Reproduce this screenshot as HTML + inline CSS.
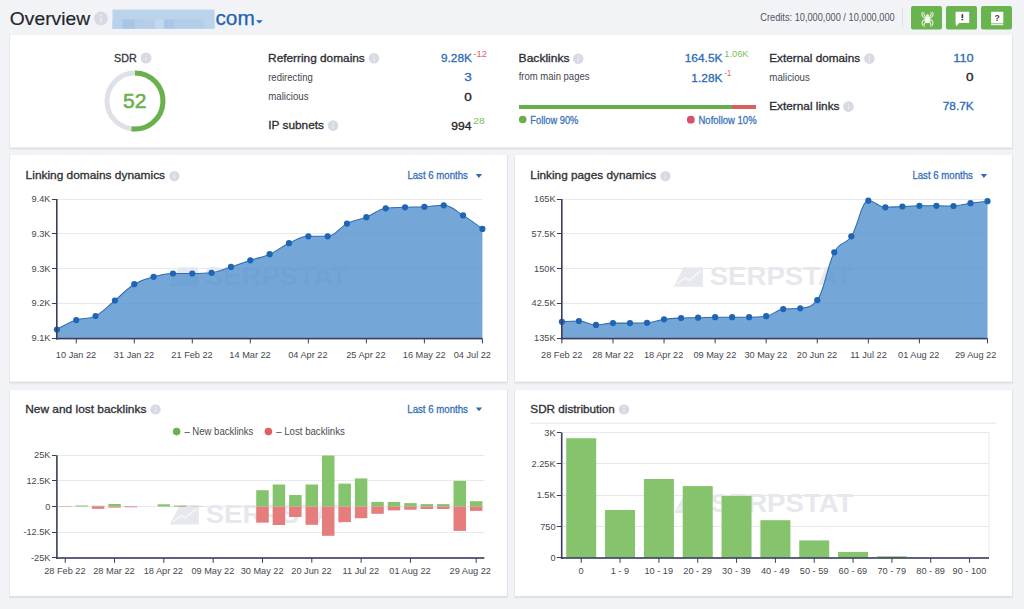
<!DOCTYPE html>
<html><head><meta charset="utf-8"><title>Overview</title>
<style>html,body{margin:0;padding:0;background:#f2f3f7;width:1024px;height:609px;overflow:hidden}
svg{display:block;font-family:"Liberation Sans", sans-serif}</style></head>
<body><svg width="1024" height="609" viewBox="0 0 1024 609">
<rect x="0" y="0" width="1024" height="609" fill="#f2f3f7"/>
<circle cx="101" cy="18.5" r="6.9" fill="#d7dae3"/>
<rect x="100.22" y="17.72" width="1.56" height="4.43" fill="#eceef3"/>
<circle cx="101" cy="15.51" r="0.98" fill="#eceef3"/>
<rect x="112.5" y="9.6" width="102" height="19.1" fill="#bcd3ec"/>
<rect x="112.5" y="19.4" width="9.9" height="9.3" fill="#b9d1eb"/>
<rect x="122.4" y="19.4" width="12.5" height="9.3" fill="#a9c6e7"/>
<rect x="134.9" y="19.4" width="9.1" height="9.3" fill="#b3cdea"/>
<rect x="144" y="19.4" width="10.8" height="9.3" fill="#b5cee9"/>
<rect x="154.8" y="19.4" width="9.1" height="9.3" fill="#c3d8ef"/>
<rect x="163.9" y="19.4" width="10.8" height="9.3" fill="#a9c6e7"/>
<rect x="174.7" y="19.4" width="29.9" height="9.3" fill="#b4ceea"/>
<rect x="204.6" y="19.4" width="9.9" height="9.3" fill="#bcd3ec"/>
<path d="M256,20.3 L262.7,20.3 L259.35,23.5 Z" fill="#1f63b2"/>
<rect x="902" y="8" width="1" height="19" fill="#dfe1e6"/>
<rect x="911" y="6" width="31" height="23.6" rx="2" fill="#6ab450"/>
<rect x="946" y="6" width="31" height="23.6" rx="2" fill="#6ab450"/>
<rect x="981" y="6" width="31" height="23.6" rx="2" fill="#6ab450"/>
<g fill="none" stroke="#e3f3d8" stroke-width="1.05" stroke-linecap="round"><path d="M924.5,17.8 Q920.8,15.5 922.3,12.4"/><path d="M930.5,17.8 Q934.2,15.5 932.7,12.4"/><path d="M925.4,16.6 Q923.2,14.8 923.9,12.6"/><path d="M929.6,16.6 Q931.8,14.8 931.1,12.6"/><path d="M924.3,19.8 Q921.0,21.5 922.6,25.3"/><path d="M930.7,19.8 Q934.0,21.5 932.4,25.3"/><path d="M925.3,22.0 Q923.6,23.6 924.2,26.3"/><path d="M929.7,22.0 Q931.4,23.6 930.8,26.3"/></g>
<path d="M927.5,16 C929.6,16 930.6,18.5 930.6,20 C930.6,22 929.3,23.3 927.5,23.3 C925.7,23.3 924.4,22 924.4,20 C924.4,18.5 925.4,16 927.5,16 Z" fill="#f4fbef"/>
<circle cx="927.5" cy="15.6" r="1.3" fill="#f4fbef"/>
<path d="M955.6,11.8 H969.2 V23 H959.2 L956.2,26.2 L955.6,23 Z" fill="#ffffff"/>
<rect x="961.5" y="14.2" width="1.7" height="3.9" fill="#3d3d3d"/><rect x="961.5" y="18.9" width="1.7" height="1.4" fill="#3d3d3d"/>
<rect x="991.1" y="11.8" width="12.2" height="11.6" fill="#ffffff"/>
<rect x="991.1" y="24" width="12.2" height="1.2" fill="#e4f2dc"/>
<text x="997.2" y="20.6" font-size="8.6" font-weight="bold" text-anchor="middle" fill="#444">?</text>
<rect x="9.4" y="34.7" width="1003.6" height="115.5" fill="#ecedf2"/>
<rect x="9.5" y="35" width="1003.2" height="114.1" fill="#dddee6"/>
<rect x="10" y="35" width="1002" height="112.5" fill="#ffffff"/>
<circle cx="146" cy="58" r="5.5" fill="#d7dae3"/>
<rect x="145.38" y="57.38" width="1.25" height="3.53" fill="#eceef3"/>
<circle cx="146" cy="55.61" r="0.78" fill="#eceef3"/>
<circle cx="135" cy="101" r="28" fill="none" stroke="#dfe1e8" stroke-width="5"/>
<path d="M135,73 A28,28 0 1 1 131.49,128.78" fill="none" stroke="#6ab04c" stroke-width="5"/>
<circle cx="374" cy="58.3" r="5.3" fill="#d7dae3"/>
<rect x="373.40" y="57.70" width="1.20" height="3.40" fill="#eceef3"/>
<circle cx="374" cy="56.00" r="0.75" fill="#eceef3"/>
<circle cx="333" cy="125.6" r="5.3" fill="#d7dae3"/>
<rect x="332.40" y="125.00" width="1.20" height="3.40" fill="#eceef3"/>
<circle cx="333" cy="123.30" r="0.75" fill="#eceef3"/>
<circle cx="578.2" cy="58.7" r="5.3" fill="#d7dae3"/>
<rect x="577.60" y="58.10" width="1.20" height="3.40" fill="#eceef3"/>
<circle cx="578.2" cy="56.40" r="0.75" fill="#eceef3"/>
<rect x="519" y="105" width="213" height="4" fill="#6aae4c"/>
<rect x="732" y="105" width="24" height="4" fill="#da5f5b"/>
<circle cx="522.7" cy="119.5" r="3.8" fill="#6aae4c"/>
<circle cx="690.8" cy="119.7" r="3.9" fill="#d9506a"/>
<circle cx="869.4" cy="58.6" r="5.3" fill="#d7dae3"/>
<rect x="868.80" y="58.00" width="1.20" height="3.40" fill="#eceef3"/>
<circle cx="869.4" cy="56.30" r="0.75" fill="#eceef3"/>
<circle cx="848.5" cy="106.6" r="5.3" fill="#d7dae3"/>
<rect x="847.90" y="106.00" width="1.20" height="3.40" fill="#eceef3"/>
<circle cx="848.5" cy="104.30" r="0.75" fill="#eceef3"/>
<rect x="9.4" y="154.7" width="498.6" height="229.60000000000002" fill="#ecedf2"/>
<rect x="9.5" y="155" width="498.2" height="228.20000000000002" fill="#dddee6"/>
<rect x="10" y="155" width="497" height="226.60000000000002" fill="#ffffff"/>
<rect x="514.4" y="154.7" width="498.6" height="229.60000000000002" fill="#ecedf2"/>
<rect x="514.5" y="155" width="498.2" height="228.20000000000002" fill="#dddee6"/>
<rect x="515" y="155" width="497" height="226.60000000000002" fill="#ffffff"/>
<rect x="9.4" y="389.7" width="498.6" height="209" fill="#ecedf2"/>
<rect x="9.5" y="390" width="498.2" height="207.6" fill="#dddee6"/>
<rect x="10" y="390" width="497" height="206" fill="#ffffff"/>
<rect x="514.4" y="389.7" width="498.6" height="209" fill="#ecedf2"/>
<rect x="514.5" y="390" width="498.2" height="207.6" fill="#dddee6"/>
<rect x="515" y="390" width="497" height="206" fill="#ffffff"/>
<circle cx="174.4" cy="176.1" r="5.2" fill="#d7dae3"/>
<rect x="173.81" y="175.51" width="1.18" height="3.34" fill="#eceef3"/>
<circle cx="174.4" cy="173.84" r="0.74" fill="#eceef3"/>
<path d="M475.7,174.1 L482.09999999999997,174.1 L478.9,177.9 Z" fill="#2e6db4"/>
<rect x="56.9" y="199" width="425.50" height="1" fill="#e8e9ec"/>
<rect x="56.9" y="233" width="425.50" height="1" fill="#e8e9ec"/>
<rect x="56.9" y="268" width="425.50" height="1" fill="#e8e9ec"/>
<rect x="56.9" y="303" width="425.50" height="1" fill="#e8e9ec"/>
<rect x="56.9" y="338" width="425.50" height="1" fill="#e8e9ec"/>
<g opacity="1.0">
<path d="M178.64999999999998,267.3 L197.84999999999997,267.3 L197.84999999999997,286.8 L168.64999999999998,286.8 Z" fill="#e7e8ee"/>
<path d="M171.64999999999998,283.8 L180.64999999999998,277.8 L184.14999999999998,280.3 L195.64999999999998,270.8" fill="none" stroke="#ffffff" stroke-opacity="0.6" stroke-width="1.6"/>
<text x="204.64999999999998" y="285.3" font-size="25.5" font-weight="bold" fill="#e7e8ee" textLength="143" lengthAdjust="spacingAndGlyphs">SERPSTAT</text>
</g>
<path d="M56.90,329.50 C56.90,329.50 68.50,322.80 76.24,320.10 C83.98,317.40 87.85,319.92 95.58,316.00 C103.32,312.08 107.19,306.86 114.92,300.50 C122.66,294.14 126.53,288.94 134.26,284.20 C142.00,279.46 145.87,278.94 153.60,276.80 C161.34,274.66 165.21,273.50 172.95,273.50 C180.68,273.50 184.55,273.50 192.29,273.50 C200.02,273.50 203.89,273.50 211.63,272.80 C219.36,272.10 223.23,269.40 230.97,266.90 C238.70,264.40 242.57,262.84 250.31,260.30 C258.05,257.76 261.91,257.62 269.65,254.20 C277.39,250.78 281.25,246.78 288.99,243.20 C296.73,239.62 300.60,236.30 308.33,236.30 C316.07,236.30 319.94,236.30 327.67,236.30 C335.41,236.30 339.28,227.42 347.01,223.60 C354.75,219.78 358.62,220.26 366.35,217.20 C374.09,214.14 377.96,209.30 385.70,208.30 C393.43,207.30 397.30,207.60 405.04,207.30 C412.77,207.00 416.64,207.20 424.38,206.80 C432.11,206.40 435.98,205.30 443.72,205.30 C451.45,205.30 455.32,210.68 463.06,215.40 C470.80,220.12 482.40,228.90 482.40,228.90 L482.40,338.6 L56.90,338.6 Z" fill="#5191ce" fill-opacity="0.8"/>
<path d="M56.90,329.50 C56.90,329.50 68.50,322.80 76.24,320.10 C83.98,317.40 87.85,319.92 95.58,316.00 C103.32,312.08 107.19,306.86 114.92,300.50 C122.66,294.14 126.53,288.94 134.26,284.20 C142.00,279.46 145.87,278.94 153.60,276.80 C161.34,274.66 165.21,273.50 172.95,273.50 C180.68,273.50 184.55,273.50 192.29,273.50 C200.02,273.50 203.89,273.50 211.63,272.80 C219.36,272.10 223.23,269.40 230.97,266.90 C238.70,264.40 242.57,262.84 250.31,260.30 C258.05,257.76 261.91,257.62 269.65,254.20 C277.39,250.78 281.25,246.78 288.99,243.20 C296.73,239.62 300.60,236.30 308.33,236.30 C316.07,236.30 319.94,236.30 327.67,236.30 C335.41,236.30 339.28,227.42 347.01,223.60 C354.75,219.78 358.62,220.26 366.35,217.20 C374.09,214.14 377.96,209.30 385.70,208.30 C393.43,207.30 397.30,207.60 405.04,207.30 C412.77,207.00 416.64,207.20 424.38,206.80 C432.11,206.40 435.98,205.30 443.72,205.30 C451.45,205.30 455.32,210.68 463.06,215.40 C470.80,220.12 482.40,228.90 482.40,228.90" fill="none" stroke="#2f6cb4" stroke-width="1.05"/>
<circle cx="56.90" cy="329.50" r="3.1" fill="#1f65b5"/>
<circle cx="76.24" cy="320.10" r="3.1" fill="#1f65b5"/>
<circle cx="95.58" cy="316.00" r="3.1" fill="#1f65b5"/>
<circle cx="114.92" cy="300.50" r="3.1" fill="#1f65b5"/>
<circle cx="134.26" cy="284.20" r="3.1" fill="#1f65b5"/>
<circle cx="153.60" cy="276.80" r="3.1" fill="#1f65b5"/>
<circle cx="172.95" cy="273.50" r="3.1" fill="#1f65b5"/>
<circle cx="192.29" cy="273.50" r="3.1" fill="#1f65b5"/>
<circle cx="211.63" cy="272.80" r="3.1" fill="#1f65b5"/>
<circle cx="230.97" cy="266.90" r="3.1" fill="#1f65b5"/>
<circle cx="250.31" cy="260.30" r="3.1" fill="#1f65b5"/>
<circle cx="269.65" cy="254.20" r="3.1" fill="#1f65b5"/>
<circle cx="288.99" cy="243.20" r="3.1" fill="#1f65b5"/>
<circle cx="308.33" cy="236.30" r="3.1" fill="#1f65b5"/>
<circle cx="327.67" cy="236.30" r="3.1" fill="#1f65b5"/>
<circle cx="347.01" cy="223.60" r="3.1" fill="#1f65b5"/>
<circle cx="366.35" cy="217.20" r="3.1" fill="#1f65b5"/>
<circle cx="385.70" cy="208.30" r="3.1" fill="#1f65b5"/>
<circle cx="405.04" cy="207.30" r="3.1" fill="#1f65b5"/>
<circle cx="424.38" cy="206.80" r="3.1" fill="#1f65b5"/>
<circle cx="443.72" cy="205.30" r="3.1" fill="#1f65b5"/>
<circle cx="463.06" cy="215.40" r="3.1" fill="#1f65b5"/>
<circle cx="482.40" cy="228.90" r="3.1" fill="#1f65b5"/>
<rect x="56.00" y="199.00" width="1.6" height="140.60" fill="#3a3e5c"/>
<rect x="56.00" y="337.80" width="426.40" height="1.6" fill="#3a3e5c"/>
<rect x="51.90" y="199" width="4.5" height="1" fill="#3a3e5c"/>
<rect x="51.90" y="233" width="4.5" height="1" fill="#3a3e5c"/>
<rect x="51.90" y="268" width="4.5" height="1" fill="#3a3e5c"/>
<rect x="51.90" y="303" width="4.5" height="1" fill="#3a3e5c"/>
<rect x="51.90" y="338" width="4.5" height="1" fill="#3a3e5c"/>
<rect x="75.74" y="338.60" width="1" height="4.8" fill="#3a3e5c"/>
<rect x="133.76" y="338.60" width="1" height="4.8" fill="#3a3e5c"/>
<rect x="191.79" y="338.60" width="1" height="4.8" fill="#3a3e5c"/>
<rect x="249.81" y="338.60" width="1" height="4.8" fill="#3a3e5c"/>
<rect x="307.83" y="338.60" width="1" height="4.8" fill="#3a3e5c"/>
<rect x="365.85" y="338.60" width="1" height="4.8" fill="#3a3e5c"/>
<rect x="423.88" y="338.60" width="1" height="4.8" fill="#3a3e5c"/>
<rect x="481.90" y="338.60" width="1" height="4.8" fill="#3a3e5c"/>
<circle cx="665.4" cy="176.1" r="5.2" fill="#d7dae3"/>
<rect x="664.81" y="175.51" width="1.18" height="3.34" fill="#eceef3"/>
<circle cx="665.4" cy="173.84" r="0.74" fill="#eceef3"/>
<path d="M980.6999999999999,174.1 L987.1,174.1 L983.9,177.9 Z" fill="#2e6db4"/>
<rect x="561.9" y="199" width="425.60" height="1" fill="#e8e9ec"/>
<rect x="561.9" y="233" width="425.60" height="1" fill="#e8e9ec"/>
<rect x="561.9" y="268" width="425.60" height="1" fill="#e8e9ec"/>
<rect x="561.9" y="303" width="425.60" height="1" fill="#e8e9ec"/>
<rect x="561.9" y="338" width="425.60" height="1" fill="#e8e9ec"/>
<g opacity="1.0">
<path d="M683.7,267.3 L702.9000000000001,267.3 L702.9000000000001,286.8 L673.7,286.8 Z" fill="#e7e8ee"/>
<path d="M676.7,283.8 L685.7,277.8 L689.2,280.3 L700.7,270.8" fill="none" stroke="#ffffff" stroke-opacity="0.6" stroke-width="1.6"/>
<text x="709.7" y="285.3" font-size="25.5" font-weight="bold" fill="#e7e8ee" textLength="143" lengthAdjust="spacingAndGlyphs">SERPSTAT</text>
</g>
<path d="M561.90,321.80 C561.90,321.80 572.11,321.00 578.92,321.00 C585.73,321.00 589.14,324.90 595.95,324.90 C602.76,324.90 606.16,323.10 612.97,323.10 C619.78,323.10 623.19,323.10 630.00,323.10 C636.81,323.10 640.21,323.10 647.02,322.80 C653.83,322.50 657.23,320.26 664.04,319.30 C670.85,318.34 674.26,318.30 681.07,318.00 C687.88,317.70 691.28,317.86 698.09,317.70 C704.90,317.54 708.31,317.20 715.12,317.20 C721.93,317.20 725.33,317.20 732.14,317.20 C738.95,317.20 742.35,317.20 749.16,317.20 C755.97,317.20 759.38,317.20 766.19,316.20 C773.00,315.20 776.40,309.90 783.21,309.10 C790.02,308.30 793.43,309.10 800.24,308.30 C807.05,307.50 810.45,308.30 817.26,300.20 C824.07,292.10 827.47,265.08 834.28,252.30 C841.09,239.52 844.50,246.62 851.31,236.30 C858.12,225.98 861.52,200.70 868.33,200.70 C875.14,200.70 878.55,207.30 885.36,207.30 C892.17,207.30 895.57,206.80 902.38,206.50 C909.19,206.20 912.59,205.80 919.40,205.80 C926.21,205.80 929.62,205.80 936.43,205.80 C943.24,205.80 946.64,206.00 953.45,206.00 C960.26,206.00 963.67,204.16 970.48,203.20 C977.29,202.24 987.50,201.20 987.50,201.20 L987.50,338.6 L561.90,338.6 Z" fill="#5191ce" fill-opacity="0.8"/>
<path d="M561.90,321.80 C561.90,321.80 572.11,321.00 578.92,321.00 C585.73,321.00 589.14,324.90 595.95,324.90 C602.76,324.90 606.16,323.10 612.97,323.10 C619.78,323.10 623.19,323.10 630.00,323.10 C636.81,323.10 640.21,323.10 647.02,322.80 C653.83,322.50 657.23,320.26 664.04,319.30 C670.85,318.34 674.26,318.30 681.07,318.00 C687.88,317.70 691.28,317.86 698.09,317.70 C704.90,317.54 708.31,317.20 715.12,317.20 C721.93,317.20 725.33,317.20 732.14,317.20 C738.95,317.20 742.35,317.20 749.16,317.20 C755.97,317.20 759.38,317.20 766.19,316.20 C773.00,315.20 776.40,309.90 783.21,309.10 C790.02,308.30 793.43,309.10 800.24,308.30 C807.05,307.50 810.45,308.30 817.26,300.20 C824.07,292.10 827.47,265.08 834.28,252.30 C841.09,239.52 844.50,246.62 851.31,236.30 C858.12,225.98 861.52,200.70 868.33,200.70 C875.14,200.70 878.55,207.30 885.36,207.30 C892.17,207.30 895.57,206.80 902.38,206.50 C909.19,206.20 912.59,205.80 919.40,205.80 C926.21,205.80 929.62,205.80 936.43,205.80 C943.24,205.80 946.64,206.00 953.45,206.00 C960.26,206.00 963.67,204.16 970.48,203.20 C977.29,202.24 987.50,201.20 987.50,201.20" fill="none" stroke="#2f6cb4" stroke-width="1.05"/>
<circle cx="561.90" cy="321.80" r="3.1" fill="#1f65b5"/>
<circle cx="578.92" cy="321.00" r="3.1" fill="#1f65b5"/>
<circle cx="595.95" cy="324.90" r="3.1" fill="#1f65b5"/>
<circle cx="612.97" cy="323.10" r="3.1" fill="#1f65b5"/>
<circle cx="630.00" cy="323.10" r="3.1" fill="#1f65b5"/>
<circle cx="647.02" cy="322.80" r="3.1" fill="#1f65b5"/>
<circle cx="664.04" cy="319.30" r="3.1" fill="#1f65b5"/>
<circle cx="681.07" cy="318.00" r="3.1" fill="#1f65b5"/>
<circle cx="698.09" cy="317.70" r="3.1" fill="#1f65b5"/>
<circle cx="715.12" cy="317.20" r="3.1" fill="#1f65b5"/>
<circle cx="732.14" cy="317.20" r="3.1" fill="#1f65b5"/>
<circle cx="749.16" cy="317.20" r="3.1" fill="#1f65b5"/>
<circle cx="766.19" cy="316.20" r="3.1" fill="#1f65b5"/>
<circle cx="783.21" cy="309.10" r="3.1" fill="#1f65b5"/>
<circle cx="800.24" cy="308.30" r="3.1" fill="#1f65b5"/>
<circle cx="817.26" cy="300.20" r="3.1" fill="#1f65b5"/>
<circle cx="834.28" cy="252.30" r="3.1" fill="#1f65b5"/>
<circle cx="851.31" cy="236.30" r="3.1" fill="#1f65b5"/>
<circle cx="868.33" cy="200.70" r="3.1" fill="#1f65b5"/>
<circle cx="885.36" cy="207.30" r="3.1" fill="#1f65b5"/>
<circle cx="902.38" cy="206.50" r="3.1" fill="#1f65b5"/>
<circle cx="919.40" cy="205.80" r="3.1" fill="#1f65b5"/>
<circle cx="936.43" cy="205.80" r="3.1" fill="#1f65b5"/>
<circle cx="953.45" cy="206.00" r="3.1" fill="#1f65b5"/>
<circle cx="970.48" cy="203.20" r="3.1" fill="#1f65b5"/>
<circle cx="987.50" cy="201.20" r="3.1" fill="#1f65b5"/>
<rect x="561.00" y="199.00" width="1.6" height="140.60" fill="#3a3e5c"/>
<rect x="561.00" y="337.80" width="426.50" height="1.6" fill="#3a3e5c"/>
<rect x="556.90" y="199" width="4.5" height="1" fill="#3a3e5c"/>
<rect x="556.90" y="233" width="4.5" height="1" fill="#3a3e5c"/>
<rect x="556.90" y="268" width="4.5" height="1" fill="#3a3e5c"/>
<rect x="556.90" y="303" width="4.5" height="1" fill="#3a3e5c"/>
<rect x="556.90" y="338" width="4.5" height="1" fill="#3a3e5c"/>
<rect x="561.40" y="338.60" width="1" height="4.8" fill="#3a3e5c"/>
<rect x="612.47" y="338.60" width="1" height="4.8" fill="#3a3e5c"/>
<rect x="663.54" y="338.60" width="1" height="4.8" fill="#3a3e5c"/>
<rect x="714.62" y="338.60" width="1" height="4.8" fill="#3a3e5c"/>
<rect x="765.69" y="338.60" width="1" height="4.8" fill="#3a3e5c"/>
<rect x="816.76" y="338.60" width="1" height="4.8" fill="#3a3e5c"/>
<rect x="867.83" y="338.60" width="1" height="4.8" fill="#3a3e5c"/>
<rect x="918.90" y="338.60" width="1" height="4.8" fill="#3a3e5c"/>
<rect x="987.00" y="338.60" width="1" height="4.8" fill="#3a3e5c"/>
<circle cx="155.5" cy="409.4" r="5.2" fill="#d7dae3"/>
<rect x="154.91" y="408.81" width="1.18" height="3.34" fill="#eceef3"/>
<circle cx="155.5" cy="407.14" r="0.74" fill="#eceef3"/>
<path d="M475.8,407.40000000000003 L482.2,407.40000000000003 L479,411.2 Z" fill="#2e6db4"/>
<circle cx="176.6" cy="431.6" r="3.8" fill="#6ab04c"/>
<circle cx="268.4" cy="431.6" r="3.8" fill="#e06060"/>
<rect x="57" y="455" width="427.40" height="1" fill="#e8e9ec"/>
<rect x="57" y="480" width="427.40" height="1" fill="#e8e9ec"/>
<rect x="57" y="506" width="427.40" height="1" fill="#e8e9ec"/>
<rect x="57" y="532" width="427.40" height="1" fill="#e8e9ec"/>
<rect x="57" y="557" width="427.40" height="1" fill="#e8e9ec"/>
<g opacity="1.0">
<path d="M179.7,505.1 L198.89999999999998,505.1 L198.89999999999998,524.6 L169.7,524.6 Z" fill="#e7e8ee"/>
<path d="M172.7,521.6 L181.7,515.6 L185.2,518.1 L196.7,508.6" fill="none" stroke="#ffffff" stroke-opacity="0.6" stroke-width="1.6"/>
<text x="205.7" y="523.1" font-size="25.5" font-weight="bold" fill="#e7e8ee" textLength="143" lengthAdjust="spacingAndGlyphs">SERPSTAT</text>
</g>
<rect x="58.97" y="506.20" width="12.5" height="0.30" fill="#85c46c"/>
<rect x="58.97" y="506.50" width="12.5" height="0.30" fill="#e67d7d"/>
<rect x="75.41" y="505.50" width="12.5" height="1.00" fill="#85c46c"/>
<rect x="91.85" y="505.80" width="12.5" height="0.70" fill="#85c46c"/>
<rect x="91.85" y="506.50" width="12.5" height="2.30" fill="#e67d7d"/>
<rect x="108.28" y="504.00" width="12.5" height="2.50" fill="#85c46c"/>
<rect x="108.28" y="506.50" width="12.5" height="1.10" fill="#e67d7d"/>
<rect x="124.72" y="506.20" width="12.5" height="0.30" fill="#85c46c"/>
<rect x="124.72" y="506.50" width="12.5" height="0.80" fill="#e67d7d"/>
<rect x="157.60" y="504.30" width="12.5" height="2.20" fill="#85c46c"/>
<rect x="174.04" y="505.60" width="12.5" height="0.90" fill="#85c46c"/>
<rect x="174.04" y="506.50" width="12.5" height="0.40" fill="#e67d7d"/>
<rect x="190.48" y="506.20" width="12.5" height="0.30" fill="#85c46c"/>
<rect x="256.23" y="490.20" width="12.5" height="16.30" fill="#85c46c"/>
<rect x="256.23" y="506.50" width="12.5" height="16.10" fill="#e67d7d"/>
<rect x="272.67" y="484.50" width="12.5" height="22.00" fill="#85c46c"/>
<rect x="272.67" y="506.50" width="12.5" height="18.50" fill="#e67d7d"/>
<rect x="289.11" y="495.00" width="12.5" height="11.50" fill="#85c46c"/>
<rect x="289.11" y="506.50" width="12.5" height="10.50" fill="#e67d7d"/>
<rect x="305.55" y="484.50" width="12.5" height="22.00" fill="#85c46c"/>
<rect x="305.55" y="506.50" width="12.5" height="18.30" fill="#e67d7d"/>
<rect x="321.98" y="455.50" width="12.5" height="51.00" fill="#85c46c"/>
<rect x="321.98" y="506.50" width="12.5" height="29.30" fill="#e67d7d"/>
<rect x="338.42" y="483.60" width="12.5" height="22.90" fill="#85c46c"/>
<rect x="338.42" y="506.50" width="12.5" height="15.60" fill="#e67d7d"/>
<rect x="354.86" y="478.40" width="12.5" height="28.10" fill="#85c46c"/>
<rect x="354.86" y="506.50" width="12.5" height="11.70" fill="#e67d7d"/>
<rect x="371.30" y="501.90" width="12.5" height="4.60" fill="#85c46c"/>
<rect x="371.30" y="506.50" width="12.5" height="7.30" fill="#e67d7d"/>
<rect x="387.74" y="501.90" width="12.5" height="4.60" fill="#85c46c"/>
<rect x="387.74" y="506.50" width="12.5" height="3.90" fill="#e67d7d"/>
<rect x="404.18" y="503.10" width="12.5" height="3.40" fill="#85c46c"/>
<rect x="404.18" y="506.50" width="12.5" height="3.20" fill="#e67d7d"/>
<rect x="420.62" y="504.10" width="12.5" height="2.40" fill="#85c46c"/>
<rect x="420.62" y="506.50" width="12.5" height="2.50" fill="#e67d7d"/>
<rect x="437.05" y="504.10" width="12.5" height="2.40" fill="#85c46c"/>
<rect x="437.05" y="506.50" width="12.5" height="2.50" fill="#e67d7d"/>
<rect x="453.49" y="480.90" width="12.5" height="25.60" fill="#85c46c"/>
<rect x="453.49" y="506.50" width="12.5" height="24.40" fill="#e67d7d"/>
<rect x="469.93" y="501.20" width="12.5" height="5.30" fill="#85c46c"/>
<rect x="469.93" y="506.50" width="12.5" height="4.40" fill="#e67d7d"/>
<rect x="56.10" y="455.30" width="1.6" height="103.70" fill="#3a3e5c"/>
<rect x="56.10" y="557.20" width="428.30" height="1.6" fill="#3a3e5c"/>
<rect x="52.00" y="455" width="4.5" height="1" fill="#3a3e5c"/>
<rect x="52.00" y="480" width="4.5" height="1" fill="#3a3e5c"/>
<rect x="52.00" y="506" width="4.5" height="1" fill="#3a3e5c"/>
<rect x="52.00" y="532" width="4.5" height="1" fill="#3a3e5c"/>
<rect x="52.00" y="557" width="4.5" height="1" fill="#3a3e5c"/>
<rect x="64.72" y="558.00" width="1" height="4.8" fill="#3a3e5c"/>
<rect x="114.03" y="558.00" width="1" height="4.8" fill="#3a3e5c"/>
<rect x="163.35" y="558.00" width="1" height="4.8" fill="#3a3e5c"/>
<rect x="212.67" y="558.00" width="1" height="4.8" fill="#3a3e5c"/>
<rect x="261.98" y="558.00" width="1" height="4.8" fill="#3a3e5c"/>
<rect x="311.30" y="558.00" width="1" height="4.8" fill="#3a3e5c"/>
<rect x="360.61" y="558.00" width="1" height="4.8" fill="#3a3e5c"/>
<rect x="409.93" y="558.00" width="1" height="4.8" fill="#3a3e5c"/>
<rect x="475.68" y="558.00" width="1" height="4.8" fill="#3a3e5c"/>
<circle cx="624" cy="409.4" r="5.2" fill="#d7dae3"/>
<rect x="623.41" y="408.81" width="1.18" height="3.34" fill="#eceef3"/>
<circle cx="624" cy="407.14" r="0.74" fill="#eceef3"/>
<rect x="530" y="422.7" width="466" height="1" fill="#e4e5e9"/>
<rect x="561.8" y="432" width="427.20" height="1" fill="#e8e9ec"/>
<rect x="561.8" y="463" width="427.20" height="1" fill="#e8e9ec"/>
<rect x="561.8" y="495" width="427.20" height="1" fill="#e8e9ec"/>
<rect x="561.8" y="526" width="427.20" height="1" fill="#e8e9ec"/>
<rect x="561.8" y="557" width="427.20" height="1" fill="#e8e9ec"/>
<rect x="988.50" y="432.00" width="1" height="125.50" fill="#e8e9ec"/>
<g opacity="1.0">
<path d="M684.4,493.6 L703.6,493.6 L703.6,513.1 L674.4,513.1 Z" fill="#e7e8ee"/>
<path d="M677.4,510.1 L686.4,504.1 L689.9,506.6 L701.4,497.1" fill="none" stroke="#ffffff" stroke-opacity="0.6" stroke-width="1.6"/>
<text x="710.4" y="511.6" font-size="25.5" font-weight="bold" fill="#e7e8ee" textLength="143" lengthAdjust="spacingAndGlyphs">SERPSTAT</text>
</g>
<rect x="566.22" y="438.20" width="30" height="119.50" fill="#85c46c"/>
<rect x="605.05" y="510.00" width="30" height="47.70" fill="#85c46c"/>
<rect x="643.89" y="479.00" width="30" height="78.70" fill="#85c46c"/>
<rect x="682.73" y="486.10" width="30" height="71.60" fill="#85c46c"/>
<rect x="721.56" y="495.90" width="30" height="61.80" fill="#85c46c"/>
<rect x="760.40" y="520.20" width="30" height="37.50" fill="#85c46c"/>
<rect x="799.24" y="540.40" width="30" height="17.30" fill="#85c46c"/>
<rect x="838.07" y="551.90" width="30" height="5.80" fill="#85c46c"/>
<rect x="876.91" y="556.30" width="30" height="1.40" fill="#85c46c"/>
<rect x="560.90" y="432.50" width="1.6" height="126.50" fill="#3a3e5c"/>
<rect x="560.90" y="557.20" width="428.10" height="1.6" fill="#3a3e5c"/>
<rect x="556.80" y="432" width="4.5" height="1" fill="#3a3e5c"/>
<rect x="556.80" y="463" width="4.5" height="1" fill="#3a3e5c"/>
<rect x="556.80" y="495" width="4.5" height="1" fill="#3a3e5c"/>
<rect x="556.80" y="526" width="4.5" height="1" fill="#3a3e5c"/>
<rect x="556.80" y="557" width="4.5" height="1" fill="#3a3e5c"/>
<rect x="580.72" y="558.00" width="1" height="4.8" fill="#3a3e5c"/>
<rect x="619.55" y="558.00" width="1" height="4.8" fill="#3a3e5c"/>
<rect x="658.39" y="558.00" width="1" height="4.8" fill="#3a3e5c"/>
<rect x="697.23" y="558.00" width="1" height="4.8" fill="#3a3e5c"/>
<rect x="736.06" y="558.00" width="1" height="4.8" fill="#3a3e5c"/>
<rect x="774.90" y="558.00" width="1" height="4.8" fill="#3a3e5c"/>
<rect x="813.74" y="558.00" width="1" height="4.8" fill="#3a3e5c"/>
<rect x="852.57" y="558.00" width="1" height="4.8" fill="#3a3e5c"/>
<rect x="891.41" y="558.00" width="1" height="4.8" fill="#3a3e5c"/>
<rect x="930.25" y="558.00" width="1" height="4.8" fill="#3a3e5c"/>
<rect x="969.08" y="558.00" width="1" height="4.8" fill="#3a3e5c"/>
<text x="9.89" y="25.00" font-size="18.5" stroke="#24272d" stroke-width="0.20" textLength="80.22" lengthAdjust="spacingAndGlyphs" fill="#24272d">Overview</text>
<text x="215.40" y="25.30" font-size="20" stroke="#1f63b2" stroke-width="0.25" textLength="39.40" lengthAdjust="spacingAndGlyphs" fill="#1f63b2">com</text>
<text x="760.34" y="21.40" font-size="11" textLength="134.32" lengthAdjust="spacingAndGlyphs" fill="#50545c">Credits: 10,000,000 / 10,000,000</text>
<text x="114.04" y="62.00" font-size="11" stroke="#33363c" stroke-width="0.30" textLength="22.62" lengthAdjust="spacingAndGlyphs" fill="#33363c">SDR</text>
<text x="123.04" y="108.20" font-size="21" stroke="#6ab04c" stroke-width="0.57" fill="#6ab04c">52</text>
<text x="268.14" y="62.00" font-size="11" stroke="#2b2e34" stroke-width="0.30" textLength="96.62" lengthAdjust="spacingAndGlyphs" fill="#2b2e34">Referring domains</text>
<text x="441.04" y="62.00" font-size="11" stroke="#2e6db4" stroke-width="0.30" textLength="30.82" lengthAdjust="spacingAndGlyphs" fill="#2e6db4">9.28K</text>
<text x="473.39" y="56.50" font-size="8.5" textLength="13.52" lengthAdjust="spacingAndGlyphs" fill="#e0606c">-12</text>
<text x="268.20" y="80.70" font-size="10" textLength="44.60" lengthAdjust="spacingAndGlyphs" fill="#44474d">redirecting</text>
<text x="464.34" y="81.20" font-size="11" stroke="#2e6db4" stroke-width="0.30" textLength="7.52" lengthAdjust="spacingAndGlyphs" fill="#2e6db4">3</text>
<text x="268.20" y="100.00" font-size="10" textLength="40.40" lengthAdjust="spacingAndGlyphs" fill="#44474d">malicious</text>
<text x="464.34" y="100.80" font-size="11" stroke="#222" stroke-width="0.30" textLength="7.52" lengthAdjust="spacingAndGlyphs" fill="#222">0</text>
<text x="268.34" y="129.00" font-size="11" stroke="#2b2e34" stroke-width="0.30" textLength="55.62" lengthAdjust="spacingAndGlyphs" fill="#2b2e34">IP subnets</text>
<text x="451.34" y="129.50" font-size="11" stroke="#222" stroke-width="0.30" textLength="20.22" lengthAdjust="spacingAndGlyphs" fill="#222">994</text>
<text x="473.39" y="124.00" font-size="8.5" textLength="11.32" lengthAdjust="spacingAndGlyphs" fill="#79bd5a">28</text>
<text x="518.64" y="62.10" font-size="11" stroke="#2b2e34" stroke-width="0.30" textLength="50.92" lengthAdjust="spacingAndGlyphs" fill="#2b2e34">Backlinks</text>
<text x="684.74" y="62.00" font-size="11" stroke="#2e6db4" stroke-width="0.30" textLength="37.72" lengthAdjust="spacingAndGlyphs" fill="#2e6db4">164.5K</text>
<text x="724.39" y="56.50" font-size="8.5" textLength="24.12" lengthAdjust="spacingAndGlyphs" fill="#79bd5a">1.06K</text>
<text x="518.70" y="80.20" font-size="10" textLength="70.80" lengthAdjust="spacingAndGlyphs" fill="#44474d">from main pages</text>
<text x="691.34" y="81.50" font-size="11" stroke="#2e6db4" stroke-width="0.30" textLength="31.12" lengthAdjust="spacingAndGlyphs" fill="#2e6db4">1.28K</text>
<text x="724.39" y="75.70" font-size="8.5" textLength="6.72" lengthAdjust="spacingAndGlyphs" fill="#e0606c">-1</text>
<text x="530.30" y="123.80" font-size="10" stroke="#3a74bb" stroke-width="0.27" textLength="48.10" lengthAdjust="spacingAndGlyphs" fill="#3a74bb">Follow 90%</text>
<text x="698.50" y="123.60" font-size="10" stroke="#3a74bb" stroke-width="0.27" textLength="58.10" lengthAdjust="spacingAndGlyphs" fill="#3a74bb">Nofollow 10%</text>
<text x="769.24" y="62.00" font-size="11" stroke="#2b2e34" stroke-width="0.30" textLength="90.92" lengthAdjust="spacingAndGlyphs" fill="#2b2e34">External domains</text>
<text x="953.24" y="61.90" font-size="11" stroke="#2e6db4" stroke-width="0.30" textLength="20.42" lengthAdjust="spacingAndGlyphs" fill="#2e6db4">110</text>
<text x="769.30" y="80.70" font-size="10" textLength="40.60" lengthAdjust="spacingAndGlyphs" fill="#44474d">malicious</text>
<text x="966.14" y="81.40" font-size="11" stroke="#222" stroke-width="0.30" textLength="7.52" lengthAdjust="spacingAndGlyphs" fill="#222">0</text>
<text x="769.24" y="109.70" font-size="11" stroke="#2b2e34" stroke-width="0.30" textLength="70.22" lengthAdjust="spacingAndGlyphs" fill="#2b2e34">External links</text>
<text x="942.74" y="109.70" font-size="11" stroke="#2e6db4" stroke-width="0.30" textLength="30.92" lengthAdjust="spacingAndGlyphs" fill="#2e6db4">78.7K</text>
<text x="25.63" y="179.10" font-size="11.2" stroke="#2e3136" stroke-width="0.31" textLength="139.44" lengthAdjust="spacingAndGlyphs" fill="#2e3136">Linking domains dynamics</text>
<text x="407.40" y="178.80" font-size="10" stroke="#3470b8" stroke-width="0.27" textLength="60.50" lengthAdjust="spacingAndGlyphs" fill="#3470b8">Last 6 months</text>
<text x="31.55" y="202.10" font-size="9.2" fill="#45484e">9.4K</text>
<text x="31.55" y="236.85" font-size="9.2" fill="#45484e">9.3K</text>
<text x="31.55" y="271.60" font-size="9.2" fill="#45484e">9.3K</text>
<text x="31.55" y="306.35" font-size="9.2" fill="#45484e">9.2K</text>
<text x="31.55" y="341.10" font-size="9.2" fill="#45484e">9.1K</text>
<text x="55.87" y="357.80" font-size="9.2" fill="#45484e">10 Jan 22</text>
<text x="113.87" y="357.80" font-size="9.2" fill="#45484e">31 Jan 22</text>
<text x="171.36" y="357.80" font-size="9.2" fill="#45484e">21 Feb 22</text>
<text x="229.36" y="357.80" font-size="9.2" fill="#45484e">14 Mar 22</text>
<text x="288.23" y="357.80" font-size="9.2" fill="#45484e">04 Apr 22</text>
<text x="346.23" y="357.80" font-size="9.2" fill="#45484e">25 Apr 22</text>
<text x="402.80" y="357.80" font-size="9.2" fill="#45484e">16 May 22</text>
<text x="453.70" y="357.80" font-size="9.2" fill="#45484e">04 Jul 22</text>
<text x="530.33" y="179.10" font-size="11.2" stroke="#2e3136" stroke-width="0.31" textLength="125.94" lengthAdjust="spacingAndGlyphs" fill="#2e3136">Linking pages dynamics</text>
<text x="912.40" y="178.80" font-size="10" stroke="#3470b8" stroke-width="0.27" textLength="60.50" lengthAdjust="spacingAndGlyphs" fill="#3470b8">Last 6 months</text>
<text x="534.09" y="202.10" font-size="9.2" fill="#45484e">165K</text>
<text x="531.54" y="236.85" font-size="9.2" fill="#45484e">57.5K</text>
<text x="534.09" y="271.60" font-size="9.2" fill="#45484e">150K</text>
<text x="531.54" y="306.35" font-size="9.2" fill="#45484e">42.5K</text>
<text x="534.09" y="341.10" font-size="9.2" fill="#45484e">135K</text>
<text x="541.06" y="358.00" font-size="9.2" fill="#45484e">28 Feb 22</text>
<text x="592.16" y="358.00" font-size="9.2" fill="#45484e">28 Mar 22</text>
<text x="643.93" y="358.00" font-size="9.2" fill="#45484e">18 Apr 22</text>
<text x="693.40" y="358.00" font-size="9.2" fill="#45484e">09 May 22</text>
<text x="744.40" y="358.00" font-size="9.2" fill="#45484e">30 May 22</text>
<text x="796.77" y="358.00" font-size="9.2" fill="#45484e">20 Jun 22</text>
<text x="850.15" y="358.00" font-size="9.2" fill="#45484e">11 Jul 22</text>
<text x="898.10" y="358.00" font-size="9.2" fill="#45484e">01 Aug 22</text>
<text x="954.90" y="358.00" font-size="9.2" fill="#45484e">29 Aug 22</text>
<text x="25.23" y="412.60" font-size="11.2" stroke="#2e3136" stroke-width="0.31" textLength="121.14" lengthAdjust="spacingAndGlyphs" fill="#2e3136">New and lost backlinks</text>
<text x="407.30" y="412.80" font-size="10" stroke="#3470b8" stroke-width="0.27" textLength="60.60" lengthAdjust="spacingAndGlyphs" fill="#3470b8">Last 6 months</text>
<text x="184.40" y="434.90" font-size="10" textLength="69.00" lengthAdjust="spacingAndGlyphs" fill="#4a4d52">– New backlinks</text>
<text x="276.20" y="434.90" font-size="10" textLength="68.60" lengthAdjust="spacingAndGlyphs" fill="#4a4d52">– Lost backlinks</text>
<text x="34.10" y="458.40" font-size="9.2" fill="#45484e">25K</text>
<text x="26.44" y="484.00" font-size="9.2" fill="#45484e">12.5K</text>
<text x="45.34" y="509.60" font-size="9.2" fill="#45484e">0</text>
<text x="23.38" y="535.20" font-size="9.2" fill="#45484e">-12.5K</text>
<text x="31.04" y="560.80" font-size="9.2" fill="#45484e">-25K</text>
<text x="44.16" y="573.70" font-size="9.2" fill="#45484e">28 Feb 22</text>
<text x="93.26" y="573.70" font-size="9.2" fill="#45484e">28 Mar 22</text>
<text x="143.63" y="573.70" font-size="9.2" fill="#45484e">18 Apr 22</text>
<text x="191.40" y="573.70" font-size="9.2" fill="#45484e">09 May 22</text>
<text x="240.70" y="573.70" font-size="9.2" fill="#45484e">30 May 22</text>
<text x="291.27" y="573.70" font-size="9.2" fill="#45484e">20 Jun 22</text>
<text x="342.55" y="573.70" font-size="9.2" fill="#45484e">11 Jul 22</text>
<text x="389.30" y="573.70" font-size="9.2" fill="#45484e">01 Aug 22</text>
<text x="449.60" y="573.70" font-size="9.2" fill="#45484e">29 Aug 22</text>
<text x="530.33" y="412.60" font-size="11.2" stroke="#2e3136" stroke-width="0.31" textLength="84.54" lengthAdjust="spacingAndGlyphs" fill="#2e3136">SDR distribution</text>
<text x="544.31" y="435.60" font-size="9.2" fill="#45484e">3K</text>
<text x="531.54" y="466.90" font-size="9.2" fill="#45484e">2.25K</text>
<text x="536.65" y="498.20" font-size="9.2" fill="#45484e">1.5K</text>
<text x="540.22" y="529.50" font-size="9.2" fill="#45484e">750</text>
<text x="550.44" y="560.80" font-size="9.2" fill="#45484e">0</text>
<text x="578.51" y="573.70" font-size="9.2" fill="#45484e">0</text>
<text x="610.71" y="573.70" font-size="9.2" fill="#45484e">1 - 9</text>
<text x="644.44" y="573.70" font-size="9.2" fill="#45484e">10 - 19</text>
<text x="683.27" y="573.70" font-size="9.2" fill="#45484e">20 - 29</text>
<text x="722.11" y="573.70" font-size="9.2" fill="#45484e">30 - 39</text>
<text x="760.95" y="573.70" font-size="9.2" fill="#45484e">40 - 49</text>
<text x="799.78" y="573.70" font-size="9.2" fill="#45484e">50 - 59</text>
<text x="838.62" y="573.70" font-size="9.2" fill="#45484e">60 - 69</text>
<text x="877.46" y="573.70" font-size="9.2" fill="#45484e">70 - 79</text>
<text x="916.29" y="573.70" font-size="9.2" fill="#45484e">80 - 89</text>
<text x="952.57" y="573.70" font-size="9.2" fill="#45484e">90 - 100</text>
</svg></body></html>
